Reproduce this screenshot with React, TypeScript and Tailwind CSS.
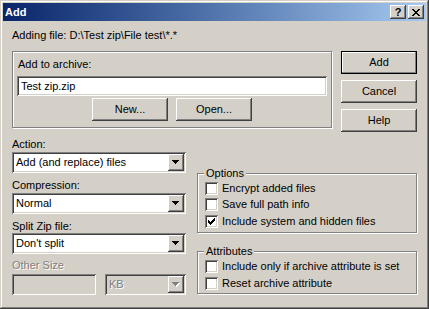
import React from "react";

const raised = "shadow-[inset_-1px_-1px_0_#404040,inset_1px_1px_0_#fff,inset_-2px_-2px_0_#808080]";
const sunken = "shadow-[inset_1px_1px_0_#808080,inset_-1px_-1px_0_#fff,inset_2px_2px_0_#404040,inset_-2px_-2px_0_#d4d0c8]";
const etched = "relative border border-[#808080] shadow-[inset_1px_1px_0_#fff,1px_1px_0_#fff]";
const disabledText = "text-[#808080] [text-shadow:1px_1px_0_#fff]";

function Button({ label, isDefault }: { label: string; isDefault?: boolean }) {
  if (isDefault) {
    return (
      <div className="w-[76px] h-[23px] border border-black">
        <div className="h-full flex items-center justify-center shadow-[inset_-1px_-1px_0_#808080,inset_1px_1px_0_#fff]">
          {label}
        </div>
      </div>
    );
  }
  return <div className={`w-[76px] h-[23px] flex items-center justify-center ${raised}`}>{label}</div>;
}

function Arrow({ disabled }: { disabled?: boolean }) {
  return (
    <svg width="8" height="5" viewBox="0 0 8 5" shapeRendering="crispEdges">
      {disabled && <path d="M1 1h7v1h-1v1h-1v1h-1v1h-1v-1h-1v-1h-1v-1h-1z" fill="#fff" />}
      <path d="M0 0h7v1h-1v1h-1v1h-1v1h-1v-1h-1v-1h-1v-1h-1z" fill={disabled ? "#808080" : "#000"} />
    </svg>
  );
}

function Combo({ value, width, disabled }: { value: string; width: string; disabled?: boolean }) {
  return (
    <div className={`${width} h-[21px] p-[2px] flex ${sunken} ${disabled ? "bg-[#d4d0c8]" : "bg-white"}`}>
      <span className={`flex-1 pl-[2px] leading-[17px] whitespace-nowrap ${disabled ? disabledText : ""}`}>
        {value}
      </span>
      <div className={`w-[16px] h-[17px] bg-[#d4d0c8] flex items-center justify-center ${raised}`}>
        <Arrow disabled={disabled} />
      </div>
    </div>
  );
}

function Checkbox({ label, checked, className = "" }: { label: string; checked?: boolean; className?: string }) {
  return (
    <div className={`h-[13px] flex items-center ${className}`}>
      <div className={`w-[13px] h-[13px] bg-white flex items-center justify-center ${sunken}`}>
        {checked && (
          <svg width="7" height="7" viewBox="0 0 7 7" shapeRendering="crispEdges">
            <path
              d="M6 0h1v3h-1v1h-1v1h-1v1h-1v1h-1v-1h-1v-1h-1v-3h1v1h1v1h1v-1h1v-1h1v-1h1z"
              fill="#000"
            />
          </svg>
        )}
      </div>
      <span className="ml-[4px] leading-[13px] whitespace-nowrap">{label}</span>
    </div>
  );
}

function Caption({ text }: { text: string }) {
  return (
    <span className="absolute -top-[7px] left-[6px] px-[2px] bg-[#d4d0c8] leading-[13px]">{text}</span>
  );
}

export default function App() {
  return (
    <div className="w-[429px] h-[309px] p-[3px] flex flex-col bg-[#d4d0c8] text-[11px] text-black font-['Liberation_Sans',Arial,sans-serif] shadow-[inset_-1px_-1px_0_#404040,inset_1px_1px_0_#d4d0c8,inset_-2px_-2px_0_#808080,inset_2px_2px_0_#fff]">
      {/* title bar */}
      <div className="h-[18px] flex items-center pl-[2px] pr-[2px] bg-linear-to-r from-[#0a246a] to-[#a6caf0]">
        <span className="text-white font-bold leading-[13px]">Add</span>
        <div className="ml-auto flex gap-[2px]">
          <div className={`w-[16px] h-[14px] bg-[#d4d0c8] flex items-center justify-center font-bold leading-[12px] ${raised}`}>
            ?
          </div>
          <div className={`w-[16px] h-[14px] bg-[#d4d0c8] flex items-center justify-center ${raised}`}>
            <svg width="8" height="7" viewBox="0 0 8 7" shapeRendering="crispEdges">
              <path
                d="M0 0h2v1h1v1h2v-1h1v-1h2v1h-1v1h-1v1h-1v1h1v1h1v1h1v1h-2v-1h-1v-1h-2v1h-1v1h-2v-1h1v-1h1v-1h1v-1h-1v-1h-1v-1h-1z"
                fill="#000"
              />
            </svg>
          </div>
        </div>
      </div>

      {/* body */}
      <div className="flex-1 pl-[9px] pt-[8px]">
        <div className="leading-[13px]">Adding file: D:\Test zip\File test\*.*</div>

        <div className="mt-[9px] flex items-start">
          <div className={`${etched} w-[320px] h-[77px] pt-[6px] px-[4px]`}>
            <div className="pl-[1px] leading-[13px]">Add to archive:</div>
            <div className={`mt-[5px] h-[20px] p-[2px] bg-white flex items-center ${sunken}`}>
              <span className="pl-[2px] leading-[13px]">Test zip.zip</span>
            </div>
            <div className="mt-[2px] flex justify-center gap-[8px]">
              <Button label="New..." />
              <Button label="Open..." />
            </div>
          </div>
          <div className="ml-[9px] flex flex-col gap-[6px]">
            <Button label="Add" isDefault />
            <Button label="Cancel" />
            <Button label="Help" />
          </div>
        </div>

        <div className="flex items-start">
          <div className="w-[174px] mt-[6px]">
            <div className="leading-[13px]">Action:</div>
            <div className="mt-[1px]">
              <Combo value="Add (and replace) files" width="w-[174px]" />
            </div>
            <div className="mt-[6px] leading-[13px]">Compression:</div>
            <div className="mt-[1px]">
              <Combo value="Normal" width="w-[174px]" />
            </div>
            <div className="mt-[6px] leading-[13px]">Split Zip file:</div>
            <Combo value="Don't split" width="w-[174px]" />
            <div className={`mt-[5px] leading-[13px] ${disabledText}`}>Other Size</div>
            <div className="mt-[2px] flex justify-between">
              <div className={`w-[84px] h-[21px] bg-[#d4d0c8] ${sunken}`} />
              <Combo value="KB" width="w-[81px]" disabled />
            </div>
          </div>

          <div className="ml-[11px] mt-[41px] w-[221px]">
            <div className={`${etched} w-[220px] h-[60px] pt-[8px] pl-[7px]`}>
              <Caption text="Options" />
              <Checkbox label="Encrypt added files" />
              <Checkbox label="Save full path info" className="mt-[3px]" />
              <Checkbox label="Include system and hidden files" checked className="mt-[4px]" />
            </div>
            <div className={`${etched} mt-[18px] w-[220px] h-[43px] pt-[8px] pl-[7px]`}>
              <Caption text="Attributes" />
              <Checkbox label="Include only if archive attribute is set" />
              <Checkbox label="Reset archive attribute" className="mt-[4px]" />
            </div>
          </div>
        </div>
      </div>
    </div>
  );
}
